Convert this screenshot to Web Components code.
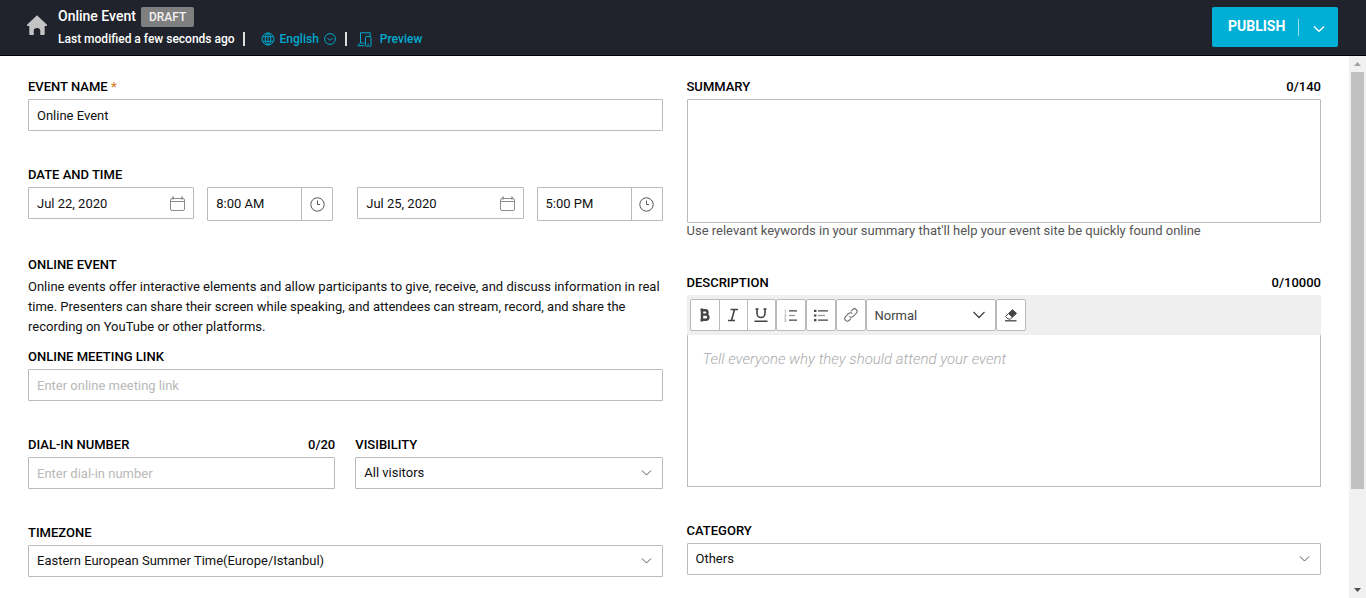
<!DOCTYPE html>
<html lang="en">
<head>
<meta charset="utf-8">
<title>Online Event</title>
<style>
  html, body { margin: 0; height: 100%; }
  body { font: 400 13px/20px Roboto, "Liberation Sans", sans-serif; color: #111; background: #fff; overflow: hidden; }
</style>
</head>
<body>
<event-page></event-page>

<script>
const shared = `
  * { box-sizing: border-box; }
  :host { display: block; min-width: 0; }
  :host([hidden]) { display: none; }
  svg { display: block; fill: none; stroke: currentColor; flex: none; }
  button, input, select, textarea { font: inherit; color: inherit; margin: 0; }
  button { background: none; border: 0; padding: 0; cursor: pointer; }
  a { color: inherit; text-decoration: none; }
  .head { display: flex; justify-content: space-between; font-weight: 500; line-height: 16px; margin-bottom: 4px; color: #000; }
  .box { display: block; width: 100%; height: 32px; padding: 0 8px; border: 1px solid #bbb; border-radius: 1px; background: #fff; outline-offset: -1px; }
  ::placeholder { color: #b9b9b9; opacity: 1; }
`;

class Base extends HTMLElement {
  connectedCallback() {
    if (this.shadowRoot) return;
    const root = this.attachShadow({ mode: 'open' });
    root.innerHTML = `<style>${shared}${this.css ? this.css() : ''}</style>${this.html()}`;
  }
  attr(name) { return this.getAttribute(name) || ''; }
}

customElements.define('text-field', class extends Base {
  css() { return `
    .req { color: #d9822b; }
    textarea.box { height: 124px; padding: 8px; resize: none; }
    .help { line-height: 16px; color: #555; }
  `; }
  html() {
    const req = this.hasAttribute('required') ? ' <span class="req">*</span>' : '';
    const count = this.attr('count') ? `<span>${this.attr('count')}</span>` : '';
    const control = this.hasAttribute('multiline')
      ? '<textarea class="box" id="control"></textarea>'
      : `<input class="box" id="control" type="text" value="${this.attr('value')}" placeholder="${this.attr('placeholder')}">`;
    return `<div class="head"><label for="control">${this.attr('label')}${req}</label>${count}</div>
      ${control}<div class="help"><slot></slot></div>`;
  }
});

customElements.define('select-field', class extends Base {
  css() { return `
    .wrap { display: grid; align-items: center; }
    .wrap > * { grid-area: 1 / 1; }
    select { appearance: none; padding: 0 32px 2px 8px; }
    svg { justify-self: end; margin-right: 11px; color: #555; pointer-events: none; }
  `; }
  html() {
    return `<div class="head"><label for="control">${this.attr('label')}</label></div>
      <div class="wrap"><select class="box" id="control"><option>${this.attr('value')}</option></select>
      <svg width="11" height="8" viewBox="0 0 11 8"><path d="M1 1.5 5.5 6 10 1.5"/></svg></div>`;
  }
});

customElements.define('date-time', class extends Base {
  css() { return `
    :host { display: grid; grid-template-columns: 1fr 126px; gap: 13px; align-items: start; }
    .date { display: grid; align-items: center; }
    .date > * { grid-area: 1 / 1; }
    .date button { justify-self: end; margin-right: 9px; color: #8c8c8c; }
    .time { display: flex; height: 34px; border: 1px solid #bbb; border-radius: 1px; }
    .time input { flex: 1; min-width: 0; border: 0; padding: 0 8px; background: none; }
    .time button { width: 31px; border-left: 1px solid #bbb; display: grid; place-items: center; color: #555; }
  `; }
  html() {
    return `<div class="date">
        <input class="box" type="text" aria-label="${this.attr('name')} date" value="${this.attr('date')}">
        <button aria-label="Pick date"><svg width="15" height="15" viewBox="0 0 15 15"><rect x=".5" y="2.5" width="14" height="12" rx="1.5"/><path d="M.5 5.5h14"/><path d="M3 .5v3M12 .5v3" stroke-width="1.6"/></svg></button>
      </div>
      <div class="time">
        <input type="text" aria-label="${this.attr('name')} time" value="${this.attr('time')}">
        <button aria-label="Pick time"><svg width="15" height="15" viewBox="0 0 15 15"><circle cx="7.5" cy="7.5" r="6.7"/><path d="M7.5 3.5v4H10"/></svg></button>
      </div>`;
  }
});

customElements.define('rich-editor', class extends Base {
  css() { return `
    .bar { display: flex; height: 40px; padding: 4px 3px; background: #efefef; color: #444; }
    .bar > * { border: 1px solid #bbb; border-radius: 2px; background: #fff; height: 32px; }
    .group { display: flex; }
    .group button + button { border-left: 1px solid #bbb; }
    .bar button { width: 28px; display: grid; place-items: center; }
    .bar > button { width: 30px; }
    .style { display: grid; align-items: center; width: 130px; }
    .style > * { grid-area: 1 / 1; }
    select { appearance: none; border: 0; background: none; width: 100%; height: 30px; padding: 1px 8px 0; }
    .style svg { justify-self: end; margin-right: 10px; pointer-events: none; }
    textarea.box { height: 152px; border-top: 0; padding: 14px 15px; resize: none; font-size: 15px; }
    textarea::placeholder { font-style: italic; font-weight: 300; color: #aaa; }
  `; }
  html() {
    return `<div class="head"><label for="text">DESCRIPTION</label><span>0/10000</span></div>
    <div class="bar" role="toolbar" aria-label="Text formatting">
      <div class="group">
        <button aria-label="Bold"><svg width="10" height="14" viewBox="0 0 10 14"><path d="M2 2.2h3.3a2.2 2.2 0 0 1 0 4.400H2h3.800a2.600 2.600 0 0 1 0 5.200H2zM.5 1.800H3M.5 12.200H3" stroke-width="2.400"/></svg></button>
        <button aria-label="Italic"><svg width="12" height="14" viewBox="0 0 12 14"><path d="M3.500 1.500H11M1 12.500h7M7.500 1.500l-3 11" stroke-width="1.600"/></svg></button>
        <button aria-label="Underline"><svg width="14" height="14" viewBox="0 0 14 14"><path d="M1.500 1h3M9.500 1h3M3 1v4.500a4 4 0 0 0 8 0V1M.5 13.200h13" stroke-width="1.600"/></svg></button>
      </div>
      <button aria-label="Numbered list"><svg width="14" height="13" viewBox="0 0 14 13"><path d="M5 1.800h8M5 11.200h8" stroke-width="1.300"/><path d="M5 6.500h6" stroke="#999" stroke-width="1.300"/><path d="M.5 1h1v3M.3 5.200h1.500v1.300L.5 8h1.600M.3 9.800h1.600v2.700H.3M.8 11.200h1" stroke="#aaa" stroke-width=".8"/></svg></button>
      <button aria-label="Bulleted list"><svg width="14" height="13" viewBox="0 0 14 13"><path d="M4 1.800h10M4 11.200h10" stroke-width="1.300"/><path d="M4 6.500h7" stroke="#999" stroke-width="1.300"/><path d="M0 1.800h2.400M0 6.500h2.400M0 11.200h2.400" stroke-width="2.200"/></svg></button>
      <button aria-label="Insert link"><svg width="16" height="16" viewBox="0 0 16 16"><g transform="rotate(-45 8 8)" stroke="#666"><path d="M5.500 10.500H3a2.600 2.600 0 0 1 0-5.200h4.500a2.600 2.600 0 0 1 2.600 2.700"/><path d="M10.500 5.300H13a2.600 2.600 0 0 1 0 5.200H8.500A2.600 2.600 0 0 1 5.900 7.800"/></g></svg></button>
      <div class="style"><select aria-label="Paragraph style"><option>Normal</option></select>
        <svg width="12" height="8" viewBox="0 0 12 8"><path d="M.5 1 6 6.500 11.500 1" stroke-width="1.300"/></svg></div>
      <button aria-label="Clear formatting"><svg width="14" height="13" viewBox="0 0 14 13"><path d="M8.500.8 12.500 4.300 8.600 8 4.500 4.500z" fill="currentColor"/><path d="M4.500 4.500 1.500 7.500 4 10H6.500L8.600 8z"/><path d="M1 11.800h11.500" stroke-width="1.300"/></svg></button>
    </div>
    <textarea class="box" id="text" placeholder="Tell everyone why they should attend your event"></textarea>`;
  }
});

customElements.define('page-header', class extends Base {
  css() { return `
    :host { background: #20232b; border-bottom: 1px solid #000; color: #fff; }
    header { display: flex; height: 55px; padding: 7px 28px 0 26px; font-weight: 500; }
    .home { color: #c4c4c4; margin: 8px 10px 0 0; height: 20px; }
    .titles { flex: 1; }
    .row { display: flex; align-items: center; height: 20px; }
    h1 { font: inherit; font-size: 14px; line-height: 20px; margin: 0 5px 0 0; }
    .row h1 { height: 22px; }
    .badge { background: #7f7f7f; color: #f2f2f2; font-size: 12px; padding: 0 8px; border-radius: 2px; }
    .meta { font-size: 12px; margin-top: 2px; }
    .sep { width: 2px; height: 14px; background: #ddd; }
    .sep:first-of-type { margin: 0 16px 0 8px; }
    .meta .tool { display: flex; align-items: center; color: #00a9ce; gap: 5px; font-weight: 500; }
    .tool + .sep { margin: 0 10px 0 9px; }
    .meta a.tool { gap: 8px; }
    .publish { display: flex; align-items: center; width: 126px; height: 40px; background: #00afd5; border-radius: 2px; }
    .publish button { height: 40px; }
    .main { padding: 0 13px 2px 16px; font-size: 14px; font-weight: 700; }
    .publish i { width: 1px; height: 17px; border-left: 1px solid #9cdcec; }
    .more { flex: 1; display: grid; place-items: center; padding-top: 4px; }
  `; }
  html() {
    return `<header>
      <a class="home" href="#" aria-label="Home"><svg width="22" height="20" viewBox="0 0 22 20"><path d="M11 .3 1 9.800V11h2.300v8q0 1 1 1h3.400v-4a3.300 3 0 0 1 6.600 0v4h3.400q1 0 1-1v-8H21V9.800z" fill="currentColor" stroke="none"/></svg></a>
      <div class="titles">
        <div class="row"><h1>Online Event</h1><span class="badge">DRAFT</span></div>
        <div class="row meta"><span>Last modified a few seconds ago</span><b class="sep"></b>
          <button class="tool"><svg width="14" height="14" viewBox="0 0 14 14"><circle cx="7" cy="7" r="6"/><ellipse cx="7" cy="7" rx="2.800" ry="6"/><path d="M1.500 4.700h11M1.500 9.300h11M7 1v12" stroke-width=".9"/></svg>English<svg width="12" height="12" viewBox="0 0 12 12"><circle cx="6" cy="6" r="5.400"/><path d="M3.500 5 6 7.500 8.500 5"/></svg></button>
          <b class="sep"></b>
          <a class="tool" href="#"><svg width="15" height="15" viewBox="0 0 15 15"><path d="M3.500 11V.8h9.700V4M3.500 11 .8 13.700H7.500M3.500 11h4"/><rect x="8.500" y="4.500" width="5.500" height="9.700" rx=".8"/><path d="M10.500 12.300h1.500"/></svg>Preview</a>
        </div>
      </div>
      <div class="publish"><button class="main">PUBLISH</button><i></i><button class="more" aria-label="More publish options"><svg width="12" height="8" viewBox="0 0 12 8"><path d="M1 1.500 6 6.300 11 1.500" stroke-width="1.300"/></svg></button></div>
    </header>`;
  }
});

customElements.define('scroll-rail', class extends Base {
  css() { return `
    :host { display: flex; flex-direction: column; align-items: center; width: 17px; background: #f1f1f1; }
    svg { fill: #a3a3a3; stroke: none; margin: 6px 0; }
    svg:last-child { fill: #505050; margin-top: auto; }
    .thumb { width: 13px; height: 77%; background: #c1c1c1; }
  `; }
  html() {
    return `<svg width="7" height="4" viewBox="0 0 7 4"><path d="M0 4 3.500 0 7 4z"/></svg><div class="thumb"></div>
      <svg width="7" height="4" viewBox="0 0 7 4"><path d="M0 0 3.500 4 7 0z"/></svg>`;
  }
});

customElements.define('event-page', class extends Base {
  css() { return `
    :host { display: flex; flex-direction: column; height: 100vh; }
    .body { flex: 1; min-height: 0; display: flex; }
    main { flex: 1; min-width: 0; overflow: hidden; display: grid; grid-template-columns: 1fr 1fr; gap: 24px; padding: 23px 28px; align-items: start; }
    .col { display: flex; flex-direction: column; gap: 36px; min-width: 0; }
    .dates { display: grid; grid-template-columns: 1fr 1fr; gap: 24px; }
    .pair { display: grid; grid-template-columns: 1fr 1fr; gap: 20px; }
    h2 { font: inherit; font-weight: 500; line-height: 16px; margin: 0; }
    p { margin: 0 0 12px; }
  `; }
  html() {
    return `<page-header></page-header>
    <div class="body">
      <main>
        <div class="col">
          <text-field label="EVENT NAME" value="Online Event" required></text-field>
          <section>
            <div class="head"><h2>DATE AND TIME</h2></div>
            <div class="dates">
              <date-time name="Start" date="Jul 22, 2020" time="8:00 AM"></date-time>
              <date-time name="End" date="Jul 25, 2020" time="5:00 PM"></date-time>
            </div>
          </section>
          <section>
            <div class="head"><h2>ONLINE EVENT</h2></div>
            <p>Online events offer interactive elements and allow participants to give, receive, and discuss information in real time. Presenters can share their screen while speaking, and attendees can stream, record, and share the recording on YouTube or other platforms.</p>
            <text-field label="ONLINE MEETING LINK" placeholder="Enter online meeting link"></text-field>
          </section>
          <div class="pair">
            <text-field label="DIAL-IN NUMBER" count="0/20" placeholder="Enter dial-in number"></text-field>
            <select-field label="VISIBILITY" value="All visitors"></select-field>
          </div>
          <select-field label="TIMEZONE" value="Eastern European Summer Time(Europe/Istanbul)"></select-field>
        </div>
        <div class="col">
          <text-field label="SUMMARY" count="0/140" multiline>Use relevant keywords in your summary that'll help your event site be quickly found online</text-field>
          <rich-editor></rich-editor>
          <select-field label="CATEGORY" value="Others"></select-field>
        </div>
      </main>
      <scroll-rail aria-hidden="true"></scroll-rail>
    </div>`;
  }
});
</script>
</body>
</html>
